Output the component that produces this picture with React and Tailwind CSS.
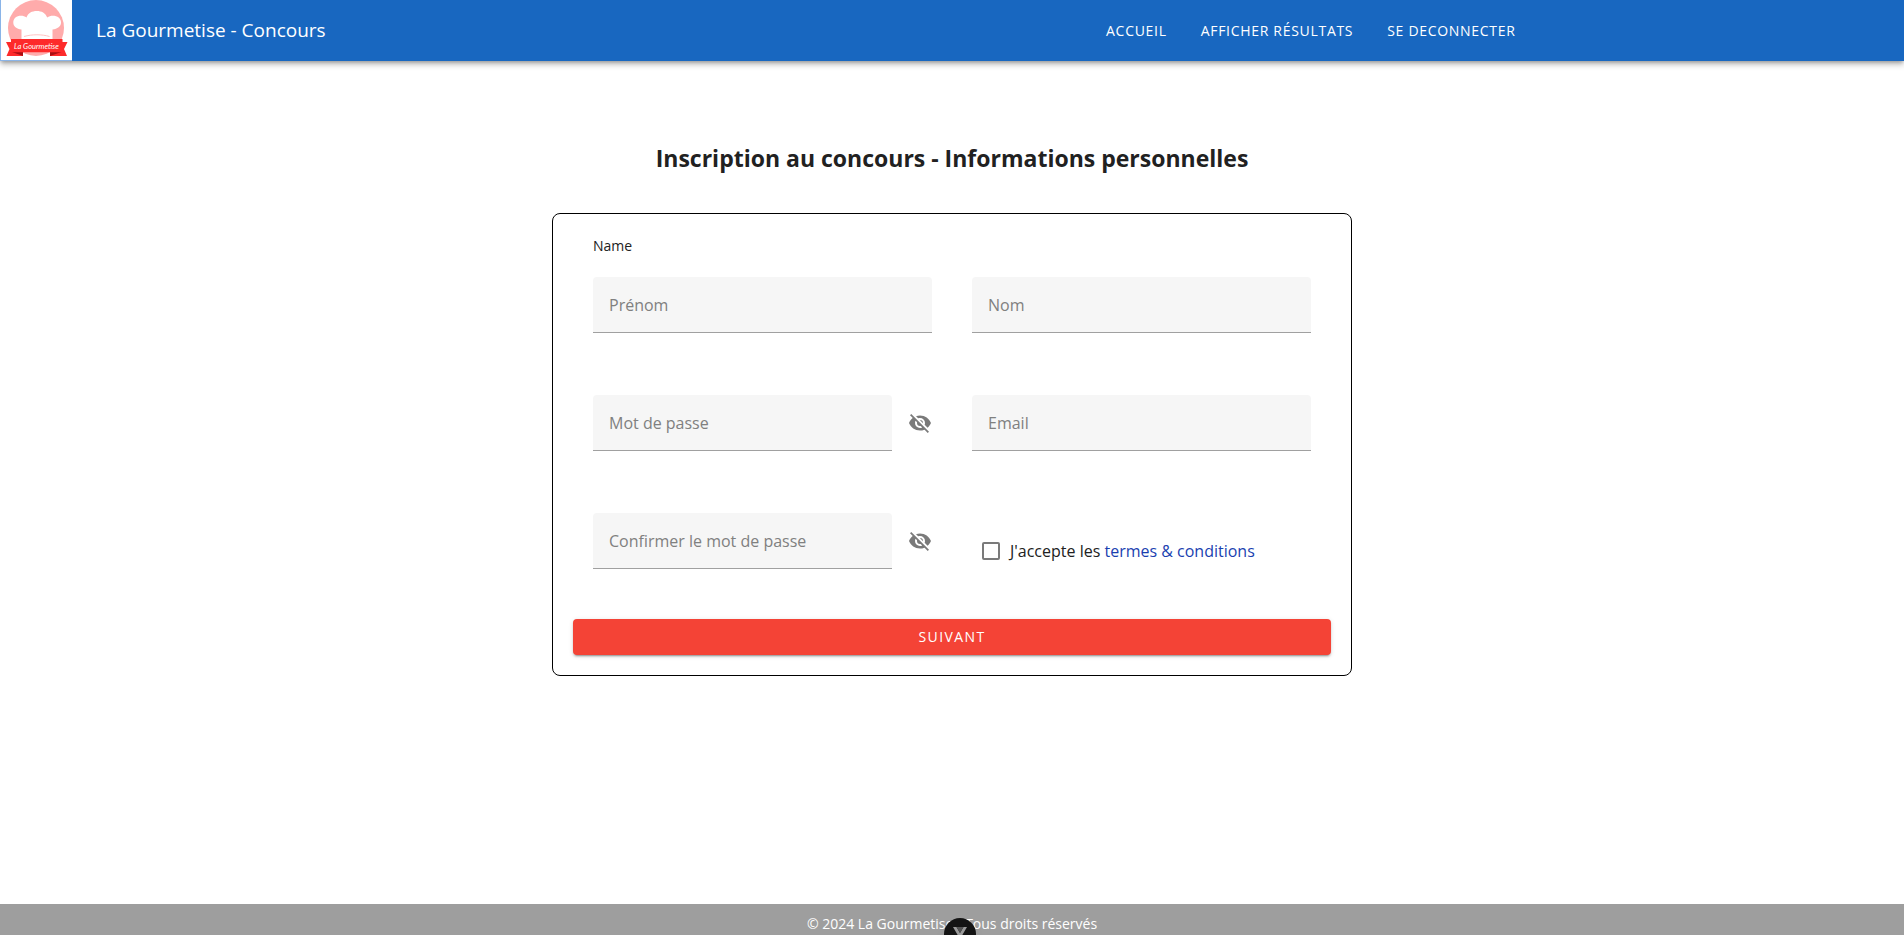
import { useState } from "react";

const eyeOff =
  "M11.83,9L15,12.16C15,12.11 15,12.05 15,12A3,3 0 0,0 12,9C11.94,9 11.89,9 11.83,9M7.53,9.8L9.08,11.35C9.03,11.56 9,11.77 9,12A3,3 0 0,0 12,15C12.22,15 12.44,14.97 12.65,14.92L14.2,16.47C13.53,16.8 12.79,17 12,17A5,5 0 0,1 7,12C7,11.21 7.2,10.47 7.53,9.8M2,4.27L4.28,6.55L4.73,7C3.08,8.3 1.78,10 1,12C2.73,16.39 7,19.5 12,19.5C13.55,19.5 15.03,19.2 16.38,18.66L16.81,19.08L19.73,22L21,20.73L3.27,3M12,7A5,5 0 0,1 17,12C17,12.64 16.87,13.26 16.64,13.82L19.57,16.75C21.07,15.5 22.27,13.86 23,12C21.27,7.61 17,4.5 12,4.5C10.6,4.5 9.26,4.75 8,5.2L10.17,7.35C10.74,7.13 11.35,7 12,7Z";

function Logo() {
  return (
    <svg viewBox="0 0 72 61" className="h-[61px] w-[72px] shrink-0" role="img" aria-label="La Gourmetise">
      <rect width="72" height="61" fill="#8ab4e8" />
      <rect x="1" width="71" height="60" fill="#fff" />
      <circle cx="36" cy="28" r="28" fill="#ffabab" />
      <path
        d="M21.500 39V29.500C16.500 29 13.300 26.400 13.300 22.500C13.300 18.500 16.500 15.800 21 15.800C23 15.800 25 16.300 26.500 17.500C28 13 32 11 36.800 11C41.500 11 45.500 13 47.200 17.500C48.800 16.300 50.800 15.800 52.800 15.800C57.500 15.800 61 18.500 61 22.500C61 26.400 57.500 29 52.500 29.500V39Z"
        fill="#fff"
      />
      <path d="M24 36.500C32 34.200 42 34.200 49.500 36.500" fill="none" stroke="#ffc4c4" strokeWidth="1" />
      <path d="M6 42H23V56H6.500L9.500 49Z M67.500 42H50V56H67L64 49Z" fill="#fd2a2a" />
      <path d="M12 52H23V56Z M61.500 52H50V56Z" fill="#a90e12" />
      <path d="M11 39H62.500V52.300H11Z" fill="#fd2a2a" />
      <text
        x="36.500"
        y="48.500"
        textAnchor="middle"
        fontSize="7.500"
        fontStyle="italic"
        fill="#fff"
        fontFamily="Lato, sans-serif"
      >
        La Gourmetise
      </text>
    </svg>
  );
}

function Field({ id, label, type = "text" }) {
  const [visible, setVisible] = useState(false);
  const secret = type === "password";
  return (
    <div className="flex items-center gap-4">
      <input
        id={id}
        aria-label={label}
        placeholder={label}
        type={secret && visible ? "text" : type}
        className="h-14 w-full min-w-0 flex-1 rounded-t border-b border-[#a0a0a0] bg-[#f6f6f6] px-4 text-base text-[#212121] outline-none placeholder:text-[#808080] focus:border-[#1867c0]"
      />
      {secret && (
        <button
          type="button"
          aria-label={"Afficher : " + label}
          onClick={() => setVisible(!visible)}
          className="size-6 shrink-0 cursor-pointer text-[#7a7a7a]"
        >
          <svg viewBox="0 0 24 24" className="size-6" fill="currentColor">
            <path d={eyeOff} />
          </svg>
        </button>
      )}
    </div>
  );
}

export default function App() {
  return (
    <div className="flex min-h-screen flex-col bg-white font-['Open_Sans','Noto_Sans',sans-serif] text-[#212121]">
      <header className="relative flex items-center bg-[#1867c0] text-white shadow-[0_2px_4px_-1px_rgba(0,0,0,0.3),0_4px_6px_rgba(0,0,0,0.2)]">
        <Logo />
        <p className="ml-6 text-[19px]">La Gourmetise - Concours</p>
        <nav className="mr-[20.400%] ml-auto flex gap-[34px] text-sm font-medium tracking-wider">
          <a href="#accueil">ACCUEIL</a>
          <a href="#resultats">AFFICHER RÉSULTATS</a>
          <a href="#deconnexion">SE DECONNECTER</a>
        </nav>
      </header>

      <main className="flex flex-1 flex-col items-center px-4 pt-[79px]">
        <h1 className="text-center text-[23px] leading-9 font-bold">
          Inscription au concours - Informations personnelles
        </h1>
        <form
          className="mt-[37px] w-full max-w-[800px] rounded-lg border border-black p-5"
          onSubmit={(e) => e.preventDefault()}
        >
          <div className="px-5">
            <p className="text-sm leading-6">Name</p>
            <div className="mt-[19px] grid grid-cols-2 gap-x-10 gap-y-[62px]">
              <Field id="prenom" label="Prénom" />
              <Field id="nom" label="Nom" />
              <Field id="mdp" label="Mot de passe" type="password" />
              <Field id="email" label="Email" type="email" />
              <Field id="confirmation" label="Confirmer le mot de passe" type="password" />
              <div className="flex items-center gap-2.5 self-end pb-1.5 pl-2.5 text-base leading-6">
                <input
                  id="termes"
                  type="checkbox"
                  className="size-[18px] appearance-none rounded-xs border-2 border-[#7a7a7a] checked:bg-[#1867c0]"
                />
                <label htmlFor="termes">
                  J'accepte les{" "}
                  <a href="#termes" className="text-[#1a3fb0]">
                    termes &amp; conditions
                  </a>
                </label>
              </div>
            </div>
          </div>
          <button
            type="submit"
            className="mt-[50px] block h-9 w-full cursor-pointer rounded bg-[#f44336] text-sm font-medium tracking-widest text-white shadow-[0_3px_1px_-2px_rgba(0,0,0,0.2),0_2px_2px_rgba(0,0,0,0.14),0_1px_5px_rgba(0,0,0,0.12)]"
          >
            SUIVANT
          </button>
        </form>
      </main>

      <footer className="relative h-[31px] overflow-hidden bg-[#9e9e9e] pt-2 text-center text-sm leading-6 text-white">
        <p>© 2024 La Gourmetise - Tous droits réservés</p>
        <button
          type="button"
          aria-label="Ouvrir"
          className="absolute top-3.5 left-1/2 ml-[-8px] size-8 rounded-full bg-[#141414] shadow-lg"
        >
          <svg viewBox="0 0 32 32" className="size-8">
            <path d="M9 9H12.500L16 15L19.500 9H23L16 21Z" fill="#9a9a9a" />
            <path d="M12.500 9H19.500L16 15Z" fill="#555" />
          </svg>
        </button>
      </footer>
    </div>
  );
}
